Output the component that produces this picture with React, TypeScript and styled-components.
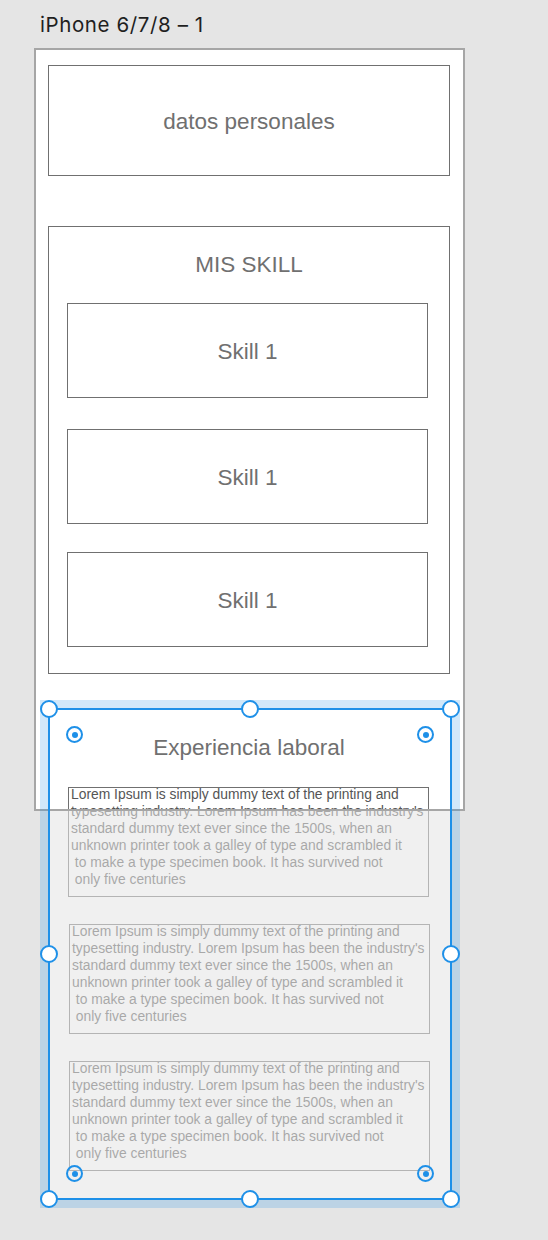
import React from 'react';
import styled, { createGlobalStyle, css } from 'styled-components';

const Global = createGlobalStyle`
  html, body { margin: 0; padding: 0; background: #e5e5e5; }
  body { font-family: "Liberation Sans", Arial, Helvetica, sans-serif; }
`;

const Canvas = styled.main`
  min-height: 1240px;
  box-sizing: border-box;
  padding: 13px 0 0 34px;
  display: flex;
  flex-direction: column;
  align-items: flex-start;
  background: #e5e5e5;
  overflow: hidden;
`;

const ArtboardName = styled.div`
  margin-left: 6px;
  height: 35px;
  font-family: Inter, "Liberation Sans", sans-serif;
  font-size: 20.5px;
  letter-spacing: 0.6px;
  line-height: 24px;
  color: #1f1f1f;
`;

const Artboard = styled.section`
  position: relative;
  width: 431px;
  height: 763px;
  box-sizing: border-box;
  background: #fff;
  padding: 17px 14px 0;
  display: flex;
  flex-direction: column;
  align-items: flex-start;
  &::after {
    content: "";
    position: absolute;
    inset: 0;
    border: 2px solid #a6a6a6;
    z-index: 2;
    pointer-events: none;
  }
`;

const OffArtboardDim = styled.div`
  position: absolute;
  left: 0;
  right: 0;
  top: 100%;
  height: 440px;
  background: rgba(229, 229, 229, 0.58);
  z-index: 1;
  pointer-events: none;
`;

const Heading = styled.div`
  font-size: 22.5px;
  line-height: 26px;
  color: #707070;
  text-align: center;
`;

const Panel = styled.div`
  box-sizing: border-box;
  flex-shrink: 0;
  width: 402px;
  border: 1px solid #707070;
`;

const PersonalBox = styled(Panel)`
  height: 111px;
  padding-top: 2px;
  display: flex;
  align-items: center;
  justify-content: center;
`;

const SkillsBox = styled(Panel)`
  margin-top: 50px;
  height: 448px;
  padding-top: 25px;
  display: flex;
  flex-direction: column;
  align-items: flex-start;
  > ${Heading} { align-self: stretch; }
`;

const SkillRow = styled.div<{ $top: number }>`
  box-sizing: border-box;
  flex-shrink: 0;
  width: 361px;
  height: 95px;
  margin: ${(p) => p.$top}px 0 0 18px;
  border: 1px solid #707070;
  padding-top: 3px;
  display: flex;
  align-items: center;
  justify-content: center;
`;

const Group = styled.div`
  position: relative;
  flex-shrink: 0;
  box-sizing: border-box;
  width: 402px;
  height: 492px;
  margin-top: 34px;
  background: #fff;
  padding-top: 27px;
  display: flex;
  flex-direction: column;
  align-items: flex-start;
  > ${Heading} { align-self: stretch; }
`;

const LoremBox = styled.div<{ $top: number; $left: number }>`
  box-sizing: border-box;
  flex-shrink: 0;
  width: 361px;
  height: 110px;
  margin: ${(p) => p.$top}px 0 0 ${(p) => p.$left}px;
  border: 1px solid #707070;
  padding-left: 2px;
`;

const LoremText = styled.p`
  margin: -2px 0 0;
  white-space: pre;
  font-size: 13.85px;
  line-height: 17px;
  color: #555555;
`;

const Selection = styled.div`
  position: absolute;
  top: 0;
  left: 0;
  right: -2px;
  bottom: 0;
  border: 2px solid #1e90e8;
  box-shadow: 0 0 0 8px rgba(27, 139, 229, 0.2);
  z-index: 3;
  pointer-events: none;
`;

type HX = 'l' | 'c' | 'r';
type HY = 't' | 'm' | 'b';

const Handle = styled.span<{ $x: HX; $y: HY }>`
  position: absolute;
  width: 18px;
  height: 18px;
  box-sizing: border-box;
  border: 2px solid #1e90e8;
  border-radius: 50%;
  background: #fff;
  ${({ $x }) =>
    $x === 'l' ? css`left: -10px;` : $x === 'r' ? css`right: -10px;` : css`left: calc(50% - 9px);`}
  ${({ $y }) =>
    $y === 't' ? css`top: -10px;` : $y === 'b' ? css`bottom: -10px;` : css`top: calc(50% - 9px);`}
`;

const RadiusHandle = styled.span<{ $x: 'l' | 'r'; $y: 't' | 'b' }>`
  position: absolute;
  width: 17px;
  height: 17px;
  box-sizing: border-box;
  border: 2px solid #1e90e8;
  border-radius: 50%;
  display: flex;
  align-items: center;
  justify-content: center;
  ${({ $x }) => ($x === 'l' ? css`left: 16px;` : css`right: 16px;`)}
  ${({ $y }) => ($y === 't' ? css`top: 16px;` : css`bottom: 16px;`)}
  &::after {
    content: "";
    width: 6px;
    height: 6px;
    border-radius: 50%;
    background: #1e90e8;
  }
`;

const LOREM = [
  'Lorem Ipsum is simply dummy text of the printing and',
  "typesetting industry. Lorem Ipsum has been the industry's",
  'standard dummy text ever since the 1500s, when an',
  'unknown printer took a galley of type and scrambled it',
  ' to make a type specimen book. It has survived not',
  ' only five centuries',
].join('\n');

const skills = [25, 31, 28];
const lorems = [
  { top: 26, left: 20 },
  { top: 27, left: 21 },
  { top: 27, left: 21 },
];

const handles: Array<[HX, HY]> = [
  ['l', 't'], ['c', 't'], ['r', 't'],
  ['l', 'm'], ['r', 'm'],
  ['l', 'b'], ['c', 'b'], ['r', 'b'],
];

export default function App() {
  return (
    <>
      <Global />
      <Canvas>
        <ArtboardName>iPhone 6/7/8 – 1</ArtboardName>
        <Artboard>
          <PersonalBox>
            <Heading>datos personales</Heading>
          </PersonalBox>
          <SkillsBox>
            <Heading>MIS SKILL</Heading>
            {skills.map((t, i) => (
              <SkillRow key={i} $top={t}>
                <Heading>Skill 1</Heading>
              </SkillRow>
            ))}
          </SkillsBox>
          <Group>
            <Heading>Experiencia laboral</Heading>
            {lorems.map((l, i) => (
              <LoremBox key={i} $top={l.top} $left={l.left}>
                <LoremText>{LOREM}</LoremText>
              </LoremBox>
            ))}
            <Selection>
              {handles.map(([x, y]) => (
                <Handle key={x + y} $x={x} $y={y} />
              ))}
              <RadiusHandle $x="l" $y="t" />
              <RadiusHandle $x="r" $y="t" />
              <RadiusHandle $x="l" $y="b" />
              <RadiusHandle $x="r" $y="b" />
            </Selection>
          </Group>
          <OffArtboardDim />
        </Artboard>
      </Canvas>
    </>
  );
}
